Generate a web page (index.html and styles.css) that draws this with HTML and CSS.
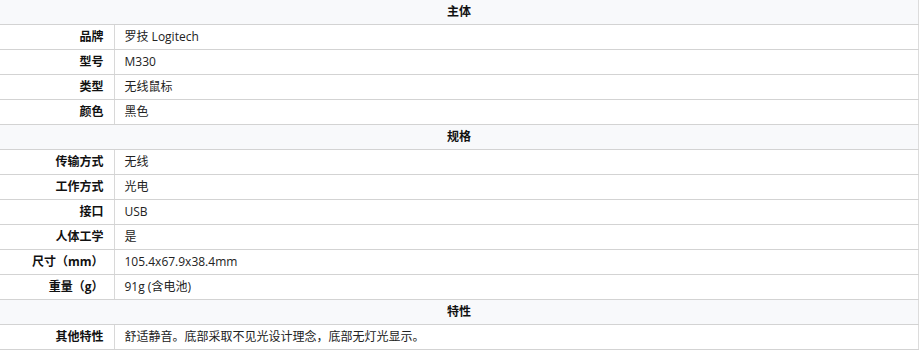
FILE: index.html
```html
<!DOCTYPE html>
<html lang="zh-CN">
<head>
<meta charset="utf-8">
<link rel="stylesheet" href="styles.css">
</head>
<body>
<table class="spec">
  <colgroup>
    <col class="col-label">
    <col class="col-value">
  </colgroup>
  <tbody>
    <tr class="group"><th colspan="2">主体</th></tr>
    <tr><th>品牌</th><td>罗技 Logitech</td></tr>
    <tr><th>型号</th><td>M330</td></tr>
    <tr><th>类型</th><td>无线鼠标</td></tr>
    <tr><th>颜色</th><td>黑色</td></tr>
    <tr class="group"><th colspan="2">规格</th></tr>
    <tr><th>传输方式</th><td>无线</td></tr>
    <tr><th>工作方式</th><td>光电</td></tr>
    <tr><th>接口</th><td>USB</td></tr>
    <tr><th>人体工学</th><td>是</td></tr>
    <tr><th>尺寸（mm）</th><td>105.4x67.9x38.4mm</td></tr>
    <tr><th>重量（g）</th><td>91g (含电池)</td></tr>
    <tr class="group"><th colspan="2">特性</th></tr>
    <tr><th>其他特性</th><td>舒适静音。底部采取不见光设计理念，底部无灯光显示。</td></tr>
  </tbody>
</table>
</body>
</html>
```

FILE: styles.css
```css
html, body {
  margin: 0;
  padding: 0;
  background: #ffffff;
}
body {
  font-family: "Open Sans", "Noto Sans CJK SC", sans-serif;
  font-size: 12px;
  color: #222;
}
.spec {
  width: 919px;
  border-collapse: collapse;
  border-right: 1px solid #dcdcdc;
  table-layout: fixed;
}
.col-label {
  width: 114px;
}
.spec th, .spec td {
  border-bottom: 1px solid #d3d3d3;
  padding: 0 10px;
  height: 24px;
  line-height: 24px;
  white-space: nowrap;
  vertical-align: middle;
}
.spec th {
  text-align: right;
  font-weight: bold;
  color: #111;
  border-right: 1px solid #d8d8d8;
}
.spec td {
  text-align: left;
}
.spec .group th {
  text-align: center;
  background: #f8f9fb;
  border-right: none;
}
```
